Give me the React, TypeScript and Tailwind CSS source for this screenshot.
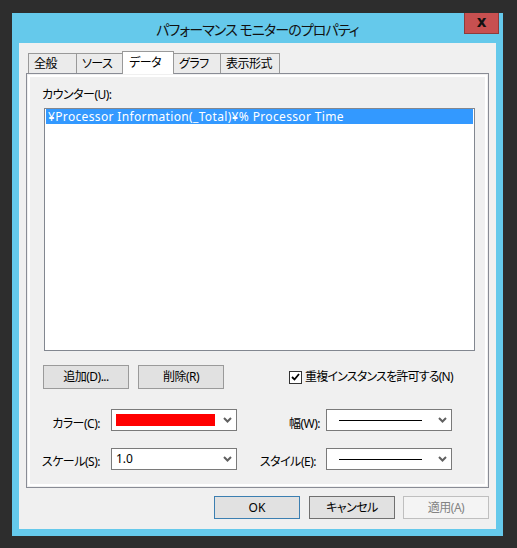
import React from "react";

const Chevron = () => (
  <svg width="9" height="6" viewBox="0 0 9 6" className="block">
    <path d="M1 1L4.5 4.5L8 1" fill="none" stroke="#606060" strokeWidth="2" />
  </svg>
);

function Tab({ label, w, active }: { label: string; w: string; active?: boolean }) {
  return active ? (
    <div className={`${w} h-[23px] -ml-px relative z-20 bg-white border border-b-0 border-[#999] pl-[6px] pt-[3px] leading-[16px]`}>
      {label}
    </div>
  ) : (
    <div className={`${w} h-[20px] mb-px -ml-px first:ml-0 bg-[#ebebeb] border border-b-0 border-[#999] pl-[5px] pt-[1px] leading-[17px]`}>
      {label}
    </div>
  );
}

function Combo({ children }: { children: React.ReactNode }) {
  return (
    <div className="w-[126px] h-[22px] bg-white border border-[#7a7a7a] flex items-center pl-[4px] pr-[4px]">
      <div className="flex-1 flex items-center">{children}</div>
      <Chevron />
    </div>
  );
}

export default function App() {
  return (
    <div className="w-[517px] h-[548px] bg-[#2d2d2d] pt-[13px] pl-[12px] font-['Noto_Sans','Noto_Sans_CJK_JP',sans-serif] [font-feature-settings:'palt'] text-[12px] tracking-[-0.5px] text-black">
      <div className="w-[491px] h-[523px] bg-[#65c9eb] flex flex-col">
        <div className="relative h-[30px] flex items-center justify-center text-[14px] tracking-[-0.9px] pt-[2px] text-[#111]">
          パフォーマンス モニターのプロパティ
          <div className="absolute right-[4px] top-0 w-[35px] h-[21px] bg-[#c75050] border border-t-0 border-[#8d3b3b] flex items-center justify-center text-[15px] tracking-normal font-bold leading-none pb-[2px] font-['DejaVu_Sans',sans-serif]">
            x
          </div>
        </div>
        <div className="mx-[7px] h-[486px] bg-[#f0f0f0] px-[7px] pt-[8px] flex flex-col">
          <div className="h-[23px] flex items-end ml-[2px] relative z-10 -mb-px">
            <Tab label="全般" w="w-[49px]" />
            <Tab label="ソース" w="w-[47px]" />
            <Tab label="データ" w="w-[52px]" active />
            <Tab label="グラフ" w="w-[48px]" />
            <Tab label="表示形式" w="w-[60px]" />
          </div>
          <div className="h-[415px] border border-[#898c95] shadow-[inset_0_0_0_1px_#f0f0f0,inset_0_0_0_3px_#ffffff] flex flex-col">
            <div className="mt-[13px] ml-[15px] leading-[16px]">カウンター(U):</div>
            <div className="mt-[5px] ml-[17px] w-[431px] h-[243px] bg-white border border-[#828790] px-px">
              <div className="h-[15px] bg-[#3399ff] text-white pl-[2px] leading-[15px] tracking-[0.35px]">
                ¥Processor Information(_Total)¥% Processor Time
              </div>
            </div>
            <div className="mt-[14px] ml-[16px] flex items-center">
              <button className="w-[86px] h-[24px] bg-[#e1e1e1] border border-[#9a9a9a]">追加(D)...</button>
              <button className="ml-[9px] w-[86px] h-[24px] bg-[#e1e1e1] border border-[#9a9a9a]">削除(R)</button>
              <div className="ml-[65px] flex items-center">
                <div className="w-[13px] h-[13px] bg-white border border-[#333] flex items-center justify-center">
                  <svg width="9" height="8" viewBox="0 0 9 8" className="block">
                    <path d="M1 4L3.5 6.5L8 1" fill="none" stroke="#000" strokeWidth="1.8" />
                  </svg>
                </div>
                <span className="ml-[3px] tracking-[-0.8px]">重複インスタンスを許可する(N)</span>
              </div>
            </div>
            <div className="mt-[20px] h-[22px] flex items-start">
              <div className="w-[73px] h-[22px] text-right pt-[7px] leading-[16px]">カラー(C):</div>
              <div className="ml-[11px]">
                <Combo>
                  <div className="w-[99px] h-[12px] bg-[#ff0000]" />
                </Combo>
              </div>
              <div className="w-[89px] h-[22px] text-right pr-[6px] pt-[7px] leading-[16px]">幅(W):</div>
              <Combo>
                <div className="ml-[8px] w-[83px] h-px bg-black" />
              </Combo>
            </div>
            <div className="mt-[17px] h-[22px] flex items-start">
              <div className="w-[73px] h-[22px] text-right pt-[6px] leading-[16px]">スケール(S):</div>
              <div className="ml-[11px]">
                <Combo>
                  <span className="leading-[16px] tracking-normal">1.0</span>
                </Combo>
              </div>
              <div className="w-[89px] h-[22px] text-right pr-[10px] pt-[6px] leading-[16px]">スタイル(E):</div>
              <Combo>
                <div className="ml-[8px] w-[83px] h-px bg-black" />
              </Combo>
            </div>
          </div>
          <div className="mt-[8px] flex justify-end">
            <button className="w-[86px] h-[23px] bg-[#e1e1e1] border border-[#3c7fb1] tracking-normal">OK</button>
            <button className="ml-[9px] w-[86px] h-[23px] bg-[#e1e1e1] border border-[#707070]">キャンセル</button>
            <button className="ml-[8px] w-[86px] h-[23px] bg-[#f4f4f4] border border-[#bfbfbf] text-[#838383]">適用(A)</button>
          </div>
        </div>
      </div>
    </div>
  );
}
